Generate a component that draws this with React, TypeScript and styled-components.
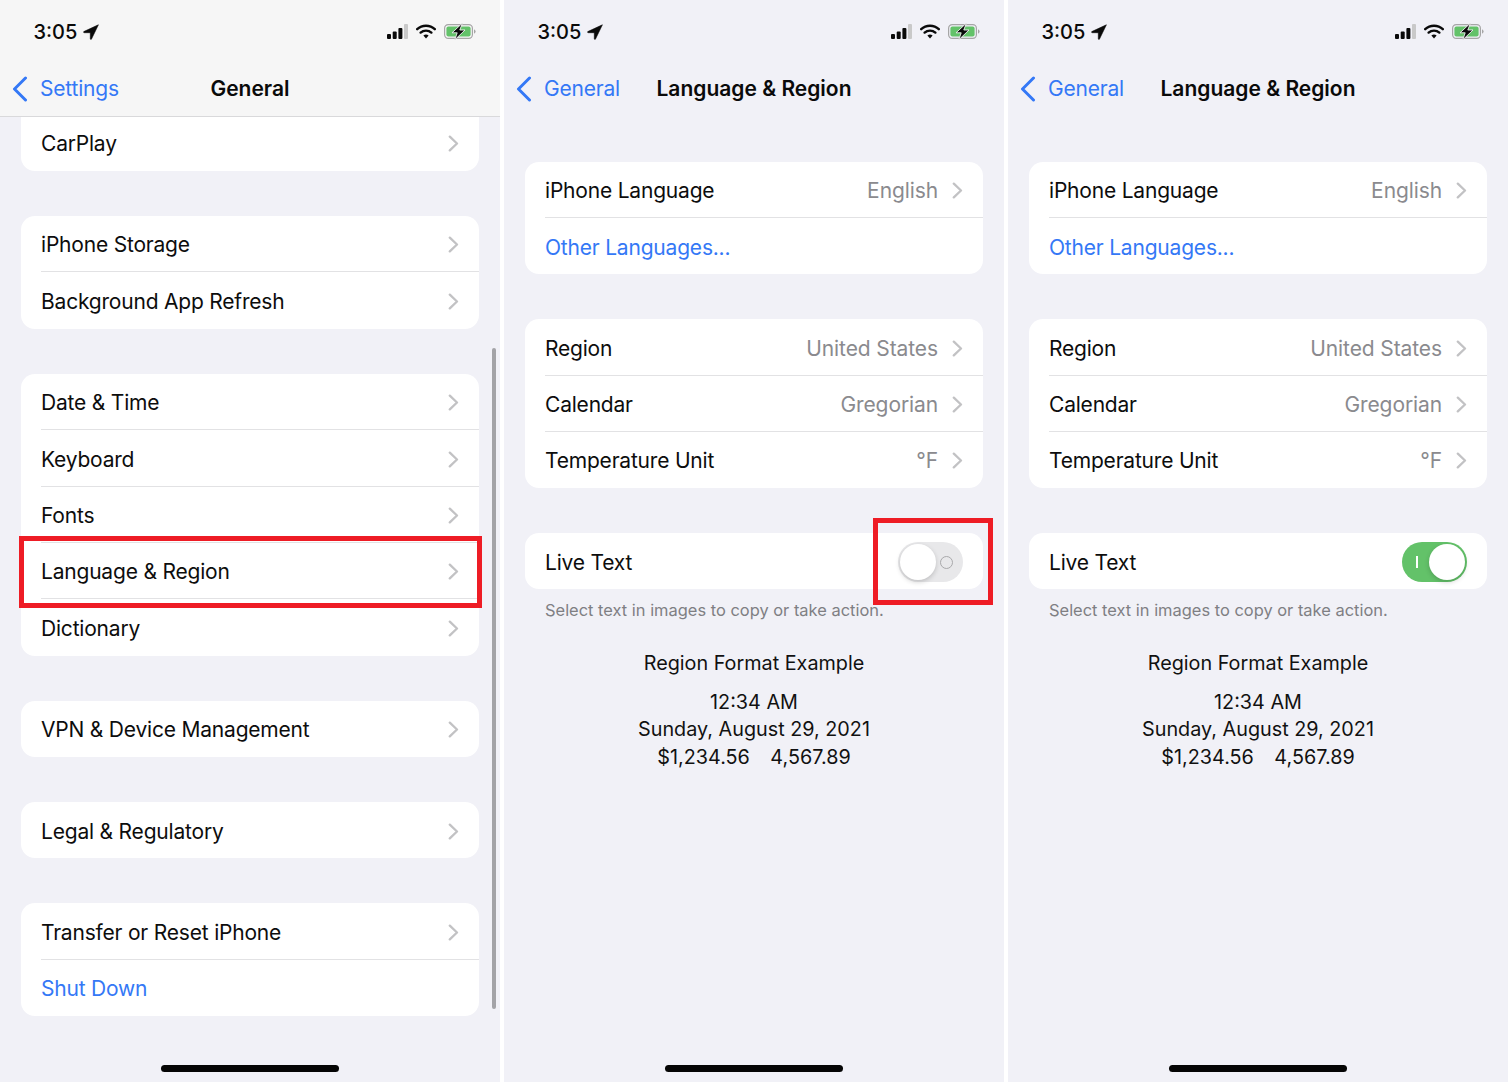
import React from "react";
import styled, { createGlobalStyle } from "styled-components";

const Global = createGlobalStyle`
  html, body { margin: 0; padding: 0; background: #fff; }
  * { box-sizing: border-box; }
  body { font-family: Inter, "Noto Sans", "Liberation Sans", sans-serif; -webkit-font-smoothing: antialiased; }
`;

const Screens = styled.div`
  display: grid;
  grid-template-columns: repeat(3, 500px);
  column-gap: 4px;
  height: 1082px;
  overflow: hidden;
`;
const Phone = styled.section`
  position: relative;
  height: 1082px;
  background: #f1f1f7;
  overflow: hidden;
`;
const Header = styled.header<{ $tinted?: boolean }>`
  height: 117px;
  background: ${(p) => (p.$tinted ? "#f6f6f6" : "transparent")};
  border-bottom: 1px solid ${(p) => (p.$tinted ? "#d9d9db" : "transparent")};
`;
const StatusBar = styled.div`
  height: 62px;
  padding: 19px 24px 0 33.5px;
  display: flex;
  justify-content: space-between;
  align-items: flex-start;
`;
const Time = styled.div`
  display: flex;
  align-items: center;
  gap: 6px;
  font-size: 20px;
  line-height: 26px;
  font-weight: 550;
  color: #0a0a0a;
`;
const StatusIcons = styled.div`
  display: flex;
  align-items: center;
  gap: 8px;
  height: 25px;
`;
const NavBar = styled.nav`
  height: 54px;
  display: grid;
  grid-template-columns: 1fr auto 1fr;
  align-items: center;
  padding-bottom: 1px;
`;
const Back = styled.div`
  display: flex;
  align-items: center;
  gap: 12px;
  padding-left: 12px;
  color: #3478f6;
  font-size: 21px;
  line-height: 27px;
  letter-spacing: -0.2px;
`;
const Title = styled.h1`
  margin: 0;
  font-size: 21px;
  line-height: 27px;
  font-weight: 600;
  color: #0a0a0a;
`;
const Content = styled.main<{ $top?: number }>`
  padding: ${(p) => p.$top ?? 0}px 21px 0;
  display: flex;
  flex-direction: column;
`;
const Group = styled.div<{ $clipped?: boolean }>`
  background: #fff;
  border-radius: ${(p) => (p.$clipped ? "0 0 14px 14px" : "14px")};
  margin-bottom: 45px;
  overflow: hidden;
`;
const Row = styled.div<{ $h: number; $clipped?: boolean }>`
  height: ${(p) => p.$h}px;
  margin-left: 20px;
  padding: ${(p) => (p.$clipped ? "0 20px 2px 0" : "2.5px 20px 0 0")};
  display: flex;
  align-items: center;
  justify-content: space-between;
  font-size: 21px;
  letter-spacing: -0.2px;
  color: #0d0d0d;
  border-bottom: 1px solid #e2e2e4;
  &:last-child {
    border-bottom: 0;
    padding-top: ${(p) => (p.$clipped ? "0" : "2px")};
  }
`;
const Label = styled.span<{ $link?: boolean }>`
  color: ${(p) => (p.$link ? "#3478f6" : "#0d0d0d")};
`;
const Trailing = styled.span`
  display: flex;
  align-items: center;
  gap: 14px;
  color: #8a8a8e;
  letter-spacing: -0.1px;
`;
const Toggle = styled.div<{ $on?: boolean }>`
  position: relative;
  width: 65px;
  height: 40px;
  border-radius: 20px;
  background: ${(p) => (p.$on ? "#63c269" : "#e8e8ea")};
`;
const Knob = styled.div<{ $on?: boolean }>`
  position: absolute;
  top: 2px;
  left: ${(p) => (p.$on ? "27px" : "2px")};
  width: 36px;
  height: 36px;
  border-radius: 50%;
  background: #fff;
  box-shadow: 0 2px 5px rgba(0, 0, 0, 0.18);
`;
const OffMark = styled.div`
  position: absolute;
  right: 10px;
  top: 14px;
  width: 13px;
  height: 13px;
  border-radius: 50%;
  border: 1.5px solid #a9a9ab;
`;
const OnMark = styled.div`
  position: absolute;
  left: 14px;
  top: 14px;
  width: 1.5px;
  height: 12px;
  background: #fff;
`;
const Footnote = styled.p`
  margin: -34.4px 0 0 20px;
  font-size: 16.45px;
  line-height: 20px;
  color: #7f7f83;
  white-space: nowrap;
`;
const Example = styled.div`
  margin-top: 30.4px;
  text-align: center;
  font-size: 19.8px;
  line-height: 27.5px;
  color: #111;
`;
const ExampleTitle = styled.div`
  margin-bottom: 11.3px;
`;
const Amounts = styled.div`
  display: flex;
  justify-content: center;
  gap: 20.5px;
`;
const ScrollThumb = styled.div`
  position: absolute;
  left: 492px;
  top: 348px;
  width: 4px;
  height: 661px;
  border-radius: 2px;
  background: #a3a3a7;
`;
const HomeBar = styled.div`
  position: absolute;
  left: 161px;
  bottom: 10px;
  width: 178px;
  height: 7px;
  border-radius: 4px;
  background: #050505;
`;
const Callout = styled.div<{ $x: number; $y: number; $w: number; $h: number }>`
  position: absolute;
  left: ${(p) => p.$x}px;
  top: ${(p) => p.$y}px;
  width: ${(p) => p.$w}px;
  height: ${(p) => p.$h}px;
  border: 5px solid #ee1c25;
`;

const Chevron = () => (
  <svg width="11" height="17" viewBox="0 0 11 17" fill="none">
    <path d="M1.8 1.6 L9 8.5 L1.8 15.4" stroke="#c2c2c4" strokeWidth="2.3" strokeLinecap="round" strokeLinejoin="round" />
  </svg>
);
const BackChevron = () => (
  <svg width="16" height="26" viewBox="0 0 16 26" fill="none">
    <path d="M13.5 2 L2.5 13 L13.5 24" stroke="#3478f6" strokeWidth="3" strokeLinecap="round" strokeLinejoin="round" />
  </svg>
);
const LocationArrow = () => (
  <svg width="16" height="16" viewBox="0 0 16 16">
    <path d="M15.4 0.8 L0.8 7.6 Q0.2 8.4 1 8.7 L7.3 8.7 L7.3 15 Q7.7 15.8 8.4 15.2 Z" fill="#0a0a0a" stroke="#0a0a0a" strokeWidth="0.6" strokeLinejoin="round" />
  </svg>
);
const Signal = () => (
  <svg width="21" height="15" viewBox="0 0 21 15">
    <rect x="0" y="10" width="4" height="5" rx="1" fill="#0a0a0a" />
    <rect x="5.7" y="7.5" width="4" height="7.5" rx="1" fill="#0a0a0a" />
    <rect x="11.4" y="4" width="4" height="11" rx="1" fill="#0a0a0a" />
    <rect x="17" y="0" width="4" height="15" rx="1" fill="#c9c9c9" />
  </svg>
);
const Wifi = () => (
  <svg width="20" height="15" viewBox="0 0 20 15" fill="none">
    <path d="M1.2 5.2 C6 0.6 14 0.6 18.8 5.2" stroke="#0a0a0a" strokeWidth="2.4" strokeLinecap="round" />
    <path d="M4.6 8.6 C7.6 5.9 12.4 5.9 15.4 8.6" stroke="#0a0a0a" strokeWidth="2.4" strokeLinecap="round" />
    <path d="M7.4 11.4 L10 14.4 L12.6 11.4 C11 10.2 9 10.2 7.4 11.4 Z" fill="#0a0a0a" />
  </svg>
);
const Battery = () => (
  <svg width="32" height="17" viewBox="0 0 32 17">
    <rect x="0.6" y="1.6" width="27.8" height="13.8" rx="3.6" fill="none" stroke="#a6a6a6" strokeWidth="1.2" />
    <rect x="2.4" y="3.4" width="24.2" height="10.2" rx="2" fill="#63c269" />
    <path d="M30 6.2 Q31.6 7 31.6 8.5 Q31.6 10 30 10.8 Z" fill="#a6a6a6" />
    <path d="M18.4 0.2 L8 9.8 L13.2 9.8 L10.8 16.8 L21 7 L15.8 7 Z" fill="#0a0a0a" stroke="#f0f0f0" strokeWidth="0.9" strokeLinejoin="round" />
  </svg>
);

const Status = () => (
  <StatusBar>
    <Time>
      3:05
      <LocationArrow />
    </Time>
    <StatusIcons>
      <Signal />
      <Wifi />
      <Battery />
    </StatusIcons>
  </StatusBar>
);

type RowData = { label: string; value?: string; link?: boolean };

const GENERAL_ROW = 56.38;
const REGION_ROW = 56.2;

const ListGroup = ({ rows, h, clipped }: { rows: RowData[]; h: number; clipped?: boolean }) => (
  <Group $clipped={clipped}>
    {rows.map((r) => (
      <Row key={r.label} $h={h} $clipped={clipped}>
        <Label $link={r.link}>{r.label}</Label>
        {!r.link && (
          <Trailing>
            {r.value}
            <Chevron />
          </Trailing>
        )}
      </Row>
    ))}
  </Group>
);

const NavHeader = ({ back, title, tinted }: { back: string; title: string; tinted?: boolean }) => (
  <Header $tinted={tinted}>
    <Status />
    <NavBar>
      <Back>
        <BackChevron />
        {back}
      </Back>
      <Title>{title}</Title>
      <span />
    </NavBar>
  </Header>
);

const RegionScreen = ({ on }: { on?: boolean }) => (
  <Phone>
    <NavHeader back="General" title="Language & Region" />
    <Content $top={45}>
      <ListGroup h={REGION_ROW} rows={[{ label: "iPhone Language", value: "English" }, { label: "Other Languages...", link: true }]} />
      <ListGroup
        h={REGION_ROW}
        rows={[
          { label: "Region", value: "United States" },
          { label: "Calendar", value: "Gregorian" },
          { label: "Temperature Unit", value: "°F" },
        ]}
      />
      <Group>
        <Row $h={REGION_ROW}>
          <Label>Live Text</Label>
          <Toggle $on={on}>
            {on ? <OnMark /> : <OffMark />}
            <Knob $on={on} />
          </Toggle>
        </Row>
      </Group>
      <Footnote>Select text in images to copy or take action.</Footnote>
      <Example>
        <ExampleTitle>Region Format Example</ExampleTitle>
        <div>12:34 AM</div>
        <div>Sunday, August 29, 2021</div>
        <Amounts>
          <span>$1,234.56</span>
          <span>4,567.89</span>
        </Amounts>
      </Example>
    </Content>
    {!on && <Callout $x={369} $y={518} $w={120} $h={87} />}
    <HomeBar />
  </Phone>
);

export default function App() {
  return (
    <>
      <Global />
      <Screens>
        <Phone>
          <NavHeader back="Settings" title="General" tinted />
          <Content>
            <ListGroup clipped h={54} rows={[{ label: "CarPlay" }]} />
            <ListGroup h={GENERAL_ROW} rows={[{ label: "iPhone Storage" }, { label: "Background App Refresh" }]} />
            <ListGroup
              h={GENERAL_ROW}
              rows={[
                { label: "Date & Time" },
                { label: "Keyboard" },
                { label: "Fonts" },
                { label: "Language & Region" },
                { label: "Dictionary" },
              ]}
            />
            <ListGroup h={GENERAL_ROW} rows={[{ label: "VPN & Device Management" }]} />
            <ListGroup h={GENERAL_ROW} rows={[{ label: "Legal & Regulatory" }]} />
            <ListGroup h={GENERAL_ROW} rows={[{ label: "Transfer or Reset iPhone" }, { label: "Shut Down", link: true }]} />
          </Content>
          <ScrollThumb />
          <Callout $x={19} $y={536} $w={463} $h={72} />
          <HomeBar />
        </Phone>
        <RegionScreen />
        <RegionScreen on />
      </Screens>
    </>
  );
}
